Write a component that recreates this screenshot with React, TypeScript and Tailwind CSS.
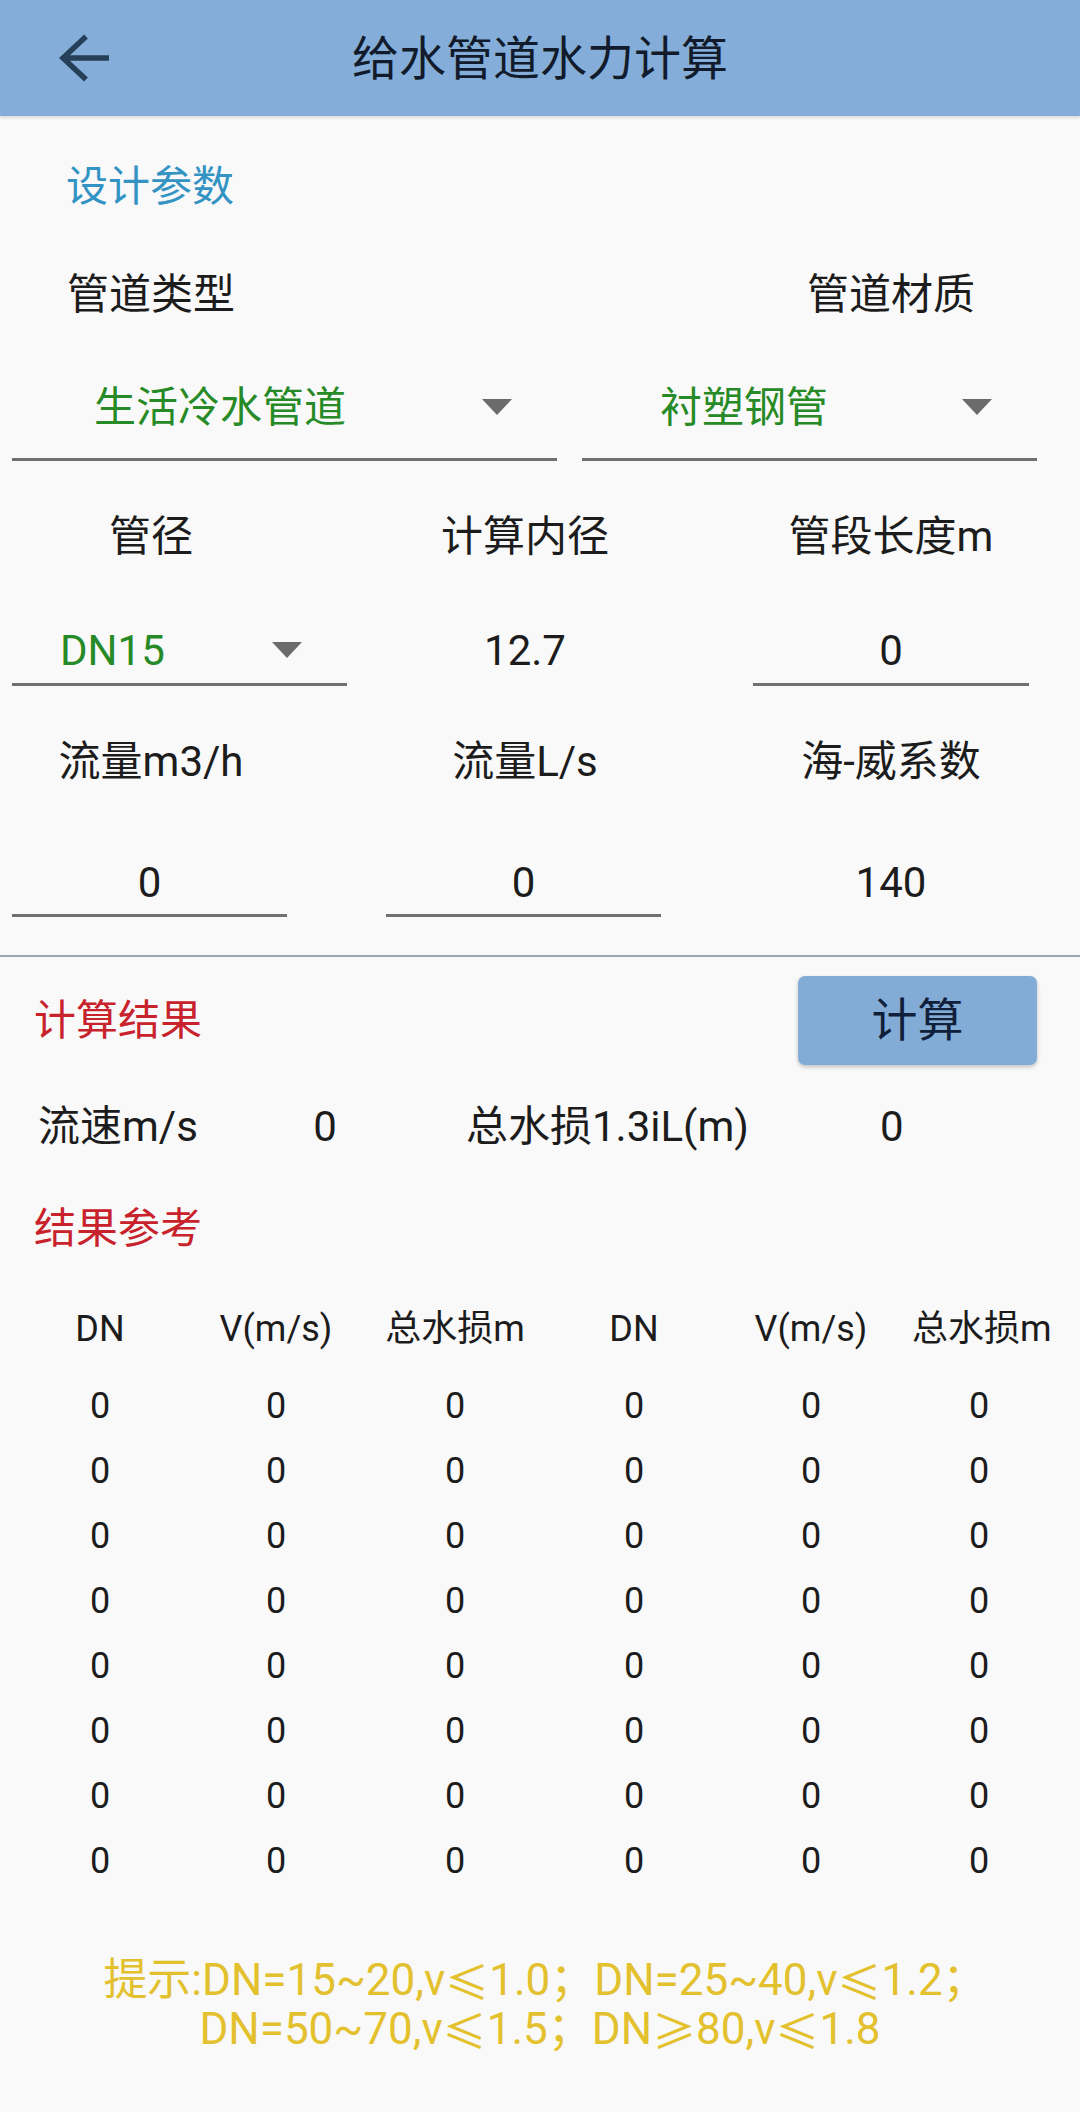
import React from "react";

const FONT = { fontFamily: "Roboto, 'Noto Sans CJK SC', sans-serif" };

function Tri() {
  return (
    <svg width="30" height="16" viewBox="0 0 30 16" className="shrink-0">
      <polygon points="0,0 30,0 15,16" fill="#6b6b6b" />
    </svg>
  );
}

function Le({ c }: { c: string }) {
  return (
    <span className="inline-block h-[49px] leading-[49px] align-top" style={{ fontFamily: "'Noto Sans CJK SC', sans-serif" }}>
      {c}
    </span>
  );
}

const rows = Array.from({ length: 8 });

export default function App() {
  return (
    <div className="w-[1080px] h-[2112px] bg-[#f9f9f9] text-[#1c1c1c] overflow-hidden" style={FONT}>
      {/* Header */}
      <div className="h-[116px] bg-[#84aed9] grid grid-cols-[160px_1fr_160px] items-center shadow-[0_2px_3px_rgba(0,0,0,0.12)]">
        <div className="pl-[59px] flex items-center">
          <svg width="52" height="50" viewBox="0 0 52 50">
            <path d="M50 25 H5 M27 3.5 L4 25 L27 46.5" stroke="#263f59" strokeWidth="5.5" fill="none" strokeLinecap="butt" strokeLinejoin="miter" />
          </svg>
        </div>
        <div className="text-center text-[47px] leading-none text-[#111b2b]">给水管道水力计算</div>
        <div />
      </div>

      {/* 设计参数 */}
      <div className="h-[140px] flex items-center pl-[66px] text-[42px] text-[#3393c3]">设计参数</div>

      {/* 管道类型 / 管道材质 */}
      <div className="h-[76px] grid grid-cols-[302px_446px_286px] items-center text-[42px]">
        <div className="text-center">管道类型</div>
        <div />
        <div className="text-center">管道材质</div>
      </div>

      {/* spinners */}
      <div className="pt-[24px] pl-[12px] flex">
        <div className="w-[545px] h-[105px] border-b-[3px] border-[#707070] flex items-center pl-[82px] pr-[45px] justify-between">
          <span className="text-[42px] text-[#268a26]">生活冷水管道</span>
          <Tri />
        </div>
        <div className="ml-[25px] w-[455px] h-[105px] border-b-[3px] border-[#707070] flex items-center pl-[78px] pr-[45px] justify-between">
          <span className="text-[42px] text-[#268a26]">衬塑钢管</span>
          <Tri />
        </div>
      </div>

      {/* 管径 row labels */}
      <div className="h-[150px] grid grid-cols-[302px_446px_286px] items-center text-[42px]">
        <div className="text-center">管径</div>
        <div className="text-center">计算内径</div>
        <div className="text-center">管段长度m</div>
      </div>

      {/* values row 1 */}
      <div className="pt-[6px] flex items-stretch text-[42px]">
        <div className="ml-[12px] w-[335px] h-[69px] border-b-[3px] border-[#707070] flex items-center pl-[48px] pr-[45px] justify-between">
          <span className="text-[#268a26]">DN15</span>
          <Tri />
        </div>
        <div className="w-[356px] h-[69px] flex items-center justify-center pb-[3px]">12.7</div>
        <div className="ml-[50px] w-[276px] h-[69px] border-b-[3px] border-[#707070] flex items-center justify-center">0</div>
      </div>

      {/* labels row 3 */}
      <div className="h-[150px] grid grid-cols-[302px_446px_286px] items-center text-[42px]">
        <div className="text-center">流量m3/h</div>
        <div className="text-center">流量L/s</div>
        <div className="text-center">海-威系数</div>
      </div>

      {/* values row 3 */}
      <div className="pt-[14px] flex text-[42px]">
        <div className="ml-[12px] w-[275px] h-[67px] border-b-[3px] border-[#707070] flex items-center justify-center">0</div>
        <div className="ml-[99px] w-[275px] h-[67px] border-b-[3px] border-[#707070] flex items-center justify-center">0</div>
        <div className="ml-[41px] w-[378px] h-[67px] flex items-center justify-center pb-[3px]">140</div>
      </div>

      {/* divider */}
      <div className="mt-[38px] h-[2px] bg-[#9aa8ad]" />

      {/* 计算结果 */}
      <div className="pt-[19px] flex items-center justify-between pl-[34px] pr-[43px]">
        <span className="text-[42px] text-[#c8222c]">计算结果</span>
        <div className="w-[239px] h-[89px] rounded-[7px] bg-[#82acd6] shadow-[0_2px_4px_rgba(0,0,0,0.22)] flex items-center justify-center text-[46px] text-[#10203a]">
          计算
        </div>
      </div>

      {/* 流速 row */}
      <div className="h-[122px] flex items-center text-[42px] whitespace-nowrap">
        <span className="ml-[38px] w-[253px]">流速m/s</span>
        <span className="w-[40px] text-center ml-[14px]">0</span>
        <span className="ml-[121px]">总水损1.3iL(m)</span>
        <span className="ml-[131px]">0</span>
      </div>

      {/* 结果参考 */}
      <div className="h-[82px] flex items-center pl-[34px] text-[42px] text-[#c8222c]">结果参考</div>

      {/* table */}
      <div className="pt-[15px] text-[36px] whitespace-nowrap">
        <div className="h-[89px] grid grid-cols-[200px_152px_206px_152px_202px_134px] items-center text-center">
          <div>DN</div>
          <div>V(m/s)</div>
          <div>总水损m</div>
          <div>DN</div>
          <div>V(m/s)</div>
          <div>总水损m</div>
        </div>
        {rows.map((_, i) => (
          <div key={i} className="h-[65px] grid grid-cols-[200px_152px_206px_152px_202px_134px] items-center text-center">
            <div>0</div>
            <div>0</div>
            <div>0</div>
            <div>0</div>
            <div>0</div>
            <div>0</div>
          </div>
        ))}
      </div>

      {/* hint */}
      <div className="mt-[63px] text-center text-[44px] leading-[49px] text-[#e3c12e] pl-[10px] whitespace-nowrap">
        <div>
          提示:DN=15~20,v<Le c="≤" />1.0；DN=25~40,v<Le c="≤" />1.2；
        </div>
        <div className="pr-[10px]">
          DN=50~70,v<Le c="≤" />1.5；DN<Le c="≥" />80,v<Le c="≤" />1.8
        </div>
      </div>
    </div>
  );
}
